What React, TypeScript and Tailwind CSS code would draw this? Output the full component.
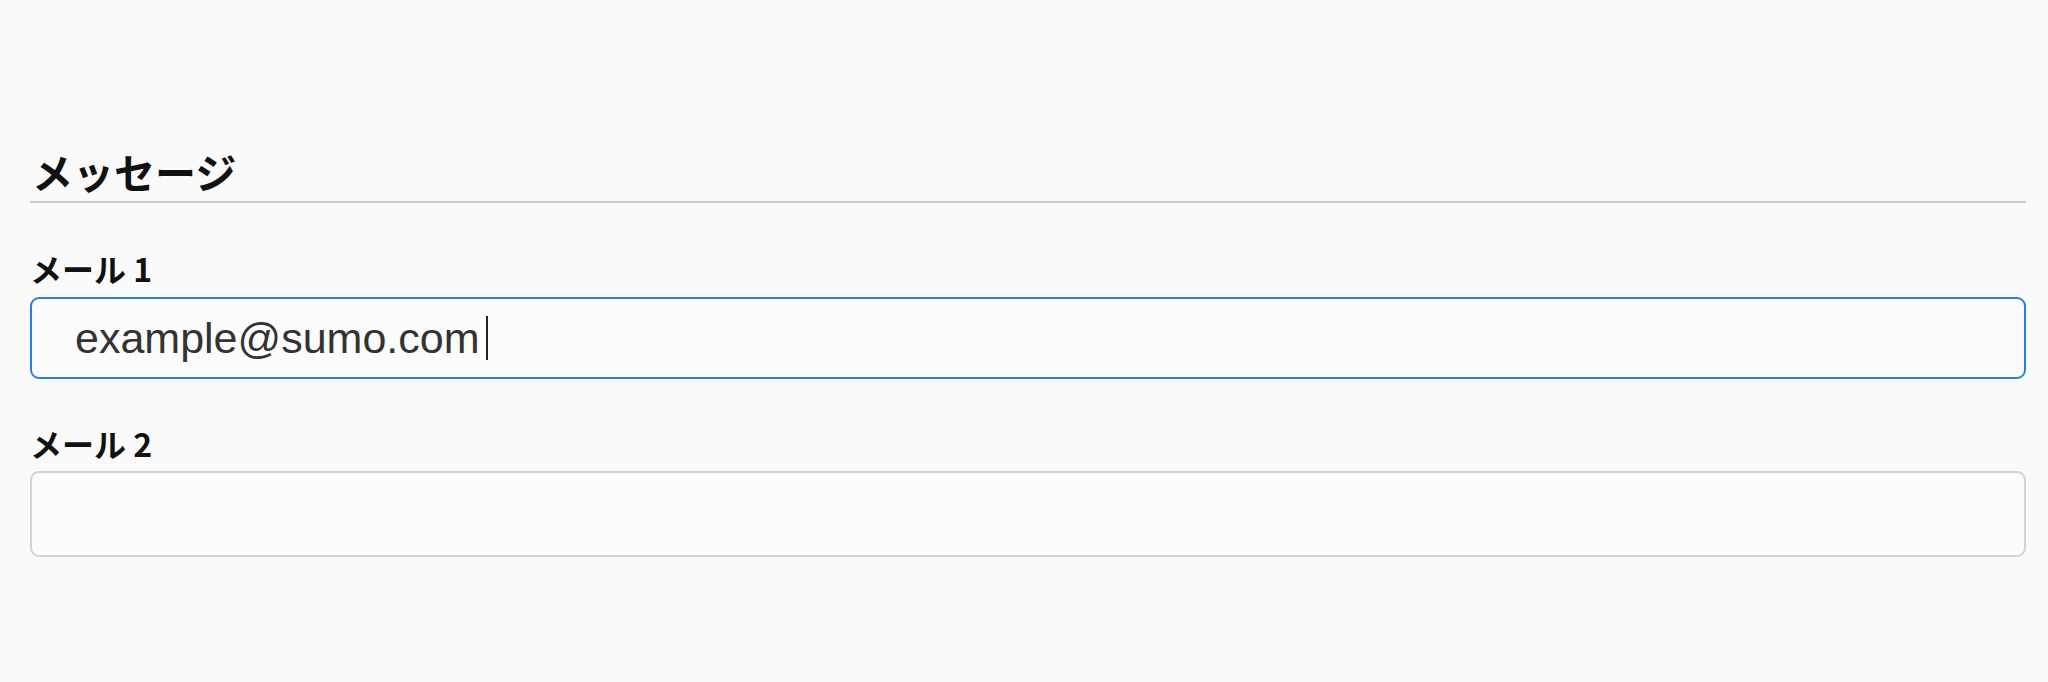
const jp = "font-['Noto_Sans_CJK_JP',sans-serif]";

function Field({ label, value, focused }: { label: string; value?: string; focused?: boolean }) {
  return (
    <div className="flex flex-col">
      <label className={`${jp} text-[32px] font-bold leading-none text-[#111]`}>{label}</label>
      <div
        className={
          focused
            ? "mt-[13px] flex h-[82px] items-center rounded-[9px] border-2 border-[#2b7de6] bg-[#fcfcfc] pl-[43px]"
            : "mt-[12px] flex h-[86px] items-center rounded-[9px] border-2 border-[#d2d2d2] bg-[#fcfcfc] pl-[43px]"
        }
      >
        {value && (
          <span className="font-['Liberation_Sans',Arial,sans-serif] text-[43px] leading-none text-[#333]">
            {value}
          </span>
        )}
        {focused && <span className="ml-[6px] h-[44px] w-[2px] bg-[#222]" />}
      </div>
    </div>
  );
}

export default function App() {
  return (
    <div className="min-h-[682px] bg-[#fafafa] pl-[30px] pr-[22px] pt-[151px]">
      <h2 className={`${jp} border-b-2 border-[#c9c9c9] pb-[9px] pl-[2px] text-[41px] font-bold leading-none text-[#111]`}>
        メッセージ
      </h2>
      <div className="mt-[49px]">
        <Field label="メール 1" value="example@sumo.com" focused />
      </div>
      <div className="mt-[48px]">
        <Field label="メール 2" />
      </div>
    </div>
  );
}
